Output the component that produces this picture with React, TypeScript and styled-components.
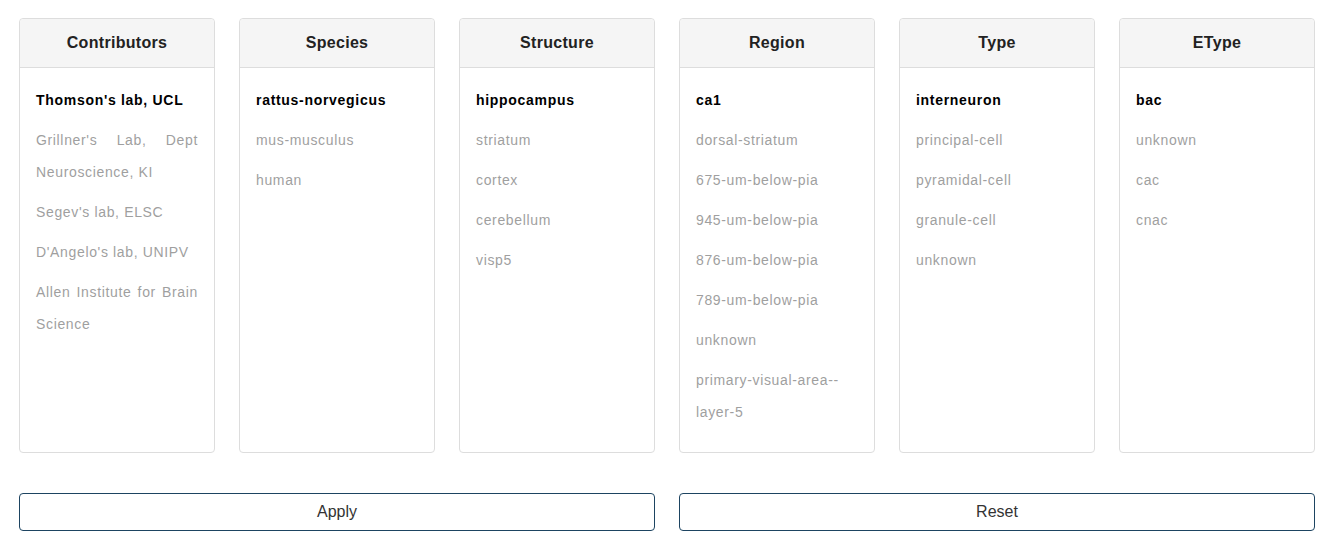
import React from "react";
import styled, { createGlobalStyle } from "styled-components";

const Global = createGlobalStyle`
  html, body { margin: 0; padding: 0; background: #fff; }
  body { font-family: "Liberation Sans", Arial, sans-serif; }
`;

const Page = styled.div`
  padding: 18px 15px 0 19px;
  width: 1296px;
`;

const Grid = styled.div`
  display: grid;
  grid-template-columns: repeat(6, 196px);
  column-gap: 24px;
  align-items: stretch;
`;

const Card = styled.div`
  border: 1px solid #dddddd;
  border-radius: 4px;
  background: #fff;
  display: flex;
  flex-direction: column;
`;

const CardHeader = styled.div`
  height: 48px;
  background: #f5f5f5;
  border-bottom: 1px solid #dddddd;
  border-radius: 4px 4px 0 0;
  display: flex;
  align-items: center;
  justify-content: center;
  font-size: 16px;
  font-weight: bold;
  letter-spacing: 0.3px;
  color: #222;
`;

const CardBody = styled.ul`
  list-style: none;
  margin: 0;
  padding: 16px;
`;

const Item = styled.li<{ $active?: boolean }>`
  font-size: 14px;
  line-height: 32px;
  margin-bottom: 8px;
  letter-spacing: ${(p) => (p.$active ? "0.7px" : "0.65px")};
  text-align: justify;
  font-weight: ${(p) => (p.$active ? "bold" : "normal")};
  color: ${(p) => (p.$active ? "#000" : "#9f9f9f")};
  cursor: pointer;
`;

const Actions = styled.div`
  display: grid;
  grid-template-columns: 1fr 1fr;
  column-gap: 24px;
  margin-top: 40px;
`;

const Button = styled.button`
  height: 38px;
  background: #fff;
  border: 1px solid #1d4461;
  border-radius: 4px;
  font-family: "Liberation Sans", Arial, sans-serif;
  font-size: 16px;
  color: #333;
  cursor: pointer;
`;

const columns: { title: string; items: string[] }[] = [
  {
    title: "Contributors",
    items: [
      "Thomson's lab, UCL",
      "Grillner's Lab, Dept Neuroscience, KI",
      "Segev's lab, ELSC",
      "D'Angelo's lab, UNIPV",
      "Allen Institute for Brain Science",
    ],
  },
  { title: "Species", items: ["rattus-norvegicus", "mus-musculus", "human"] },
  { title: "Structure", items: ["hippocampus", "striatum", "cortex", "cerebellum", "visp5"] },
  {
    title: "Region",
    items: [
      "ca1",
      "dorsal-striatum",
      "675-um-below-pia",
      "945-um-below-pia",
      "876-um-below-pia",
      "789-um-below-pia",
      "unknown",
      "primary-visual-area--layer-5",
    ],
  },
  { title: "Type", items: ["interneuron", "principal-cell", "pyramidal-cell", "granule-cell", "unknown"] },
  { title: "EType", items: ["bac", "unknown", "cac", "cnac"] },
];

export default function App() {
  return (
    <>
      <Global />
      <Page>
        <Grid>
          {columns.map((c) => (
            <Card key={c.title}>
              <CardHeader>{c.title}</CardHeader>
              <CardBody>
                {c.items.map((it, i) => (
                  <Item key={it} $active={i === 0}>
                    {it}
                  </Item>
                ))}
              </CardBody>
            </Card>
          ))}
        </Grid>
        <Actions>
          <Button>Apply</Button>
          <Button>Reset</Button>
        </Actions>
      </Page>
    </>
  );
}
